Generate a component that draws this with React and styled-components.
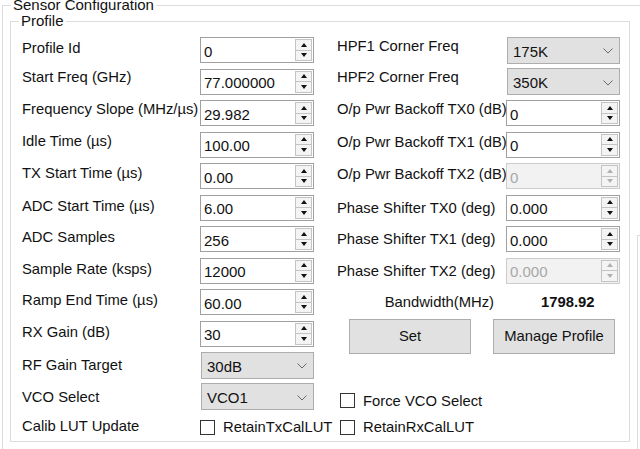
import React from "react"
import styled, { createGlobalStyle } from "styled-components"

const GlobalStyle = createGlobalStyle`
  html, body {
    margin: 0;
    padding: 0;
    background: #ffffff;
    overflow: hidden;
  }
  body {
    width: 640px;
    height: 449px;
    font-family: "Liberation Sans", Arial, sans-serif;
    font-size: 14.8px;
    color: #111111;
  }
  #root {
    width: 640px;
    height: 449px;
    overflow: hidden;
  }
`

const leftRows = [
  { label: "Profile Id", value: "0", dy: -2.5 },
  { label: "Start Freq (GHz)", value: "77.000000", dy: -5 },
  { label: "Frequency Slope (MHz/µs)", value: "29.982", dy: -4.5 },
  { label: "Idle Time (µs)", value: "100.00", dy: -4 },
  { label: "TX Start Time (µs)", value: "0.00", dy: -3.5 },
  { label: "ADC Start Time (µs)", value: "6.00", dy: -2 },
  { label: "ADC Samples", value: "256", dy: -2.5 },
  { label: "Sample Rate (ksps)", value: "12000", dy: -2 },
  { label: "Ramp End Time (µs)", value: "60.00", dy: -2.5 },
  { label: "RX Gain (dB)", value: "30", dy: -2 },
  { label: "RF Gain Target", combo: "30dB", dy: -0.5 },
  { label: "VCO Select", combo: "VCO1", dy: 0 },
]

const rightRows = [
  { label: "HPF1 Corner Freq", combo: "175K", dy: -4 },
  { label: "HPF2 Corner Freq", combo: "350K", dy: -5 },
  { label: "O/p Pwr Backoff TX0 (dB)", value: "0", dy: -4.5 },
  { label: "O/p Pwr Backoff TX1 (dB)", value: "0", dy: -3 },
  { label: "O/p Pwr Backoff TX2 (dB)", value: "0", dy: -2.5, disabled: true },
  { label: "Phase Shifter TX0 (deg)", value: "0.000", dy: 0 },
  { label: "Phase Shifter TX1 (deg)", value: "0.000", dy: 0 },
  { label: "Phase Shifter TX2 (deg)", value: "0.000", dy: 0, disabled: true },
]

const Chevron = () => (
  <svg width="10" height="6" viewBox="0 0 10 6">
    <path d="M0.5 0.5 L5 5 L9.5 0.5" fill="none" stroke="#6a6a6a" strokeWidth="1" />
  </svg>
)

const SpinField = ({ value, disabled }) => (
  <Field $disabled={disabled}>
    <FieldText $disabled={disabled}>{value}</FieldText>
    <Spinner>
      <SpinButton>
        <Arrow $up $disabled={disabled} />
      </SpinButton>
      <SpinButton>
        <Arrow $disabled={disabled} />
      </SpinButton>
    </Spinner>
  </Field>
)

const ComboBox = ({ value }) => (
  <Combo>
    <span>{value}</span>
    <Chevron />
  </Combo>
)

const CheckItem = ({ label, dy }) => (
  <Check $dy={dy}>
    <Box />
    <span>{label}</span>
  </Check>
)

const Row = ({ row }) => (
  <>
    <Label $dy={row.dy}>{row.label}</Label>
    {row.combo ? (
      <ComboBox value={row.combo} />
    ) : (
      <SpinField value={row.value} disabled={row.disabled} />
    )}
  </>
)

const App = () => {
  return (
    <>
      <GlobalStyle />
      <Outer>
        <Legend $offset={1}>Sensor Configuration</Legend>
        <Profile>
          <Legend $offset={-3}>Profile</Legend>
          <Form>
            <Grid>
              {leftRows.map(row => (
                <Row key={row.label} row={row} />
              ))}
              <Label $dy={0.5}>Calib LUT Update</Label>
              <CheckItem label="RetainTxCalLUT" dy={2} />
            </Grid>
            <RightGrid>
              {rightRows.map(row => (
                <Row key={row.label} row={row} />
              ))}
              <Bandwidth>Bandwidth(MHz)</Bandwidth>
              <BandValue>1798.92</BandValue>
              <Buttons>
                <Button>Set</Button>
                <Button>Manage Profile</Button>
              </Buttons>
              <Wide>
                <CheckItem label="Force VCO Select" dy={4} />
              </Wide>
              <Wide>
                <CheckItem label="RetainRxCalLUT" dy={2} />
              </Wide>
            </RightGrid>
          </Form>
        </Profile>
        <SidePanel />
      </Outer>
    </>
  )
}

export default App

const Outer = styled.fieldset`
  box-sizing: border-box;
  width: 800px;
  min-width: 0;
  margin: 0 0 0 2px;
  padding: 6px 0 20px 7px;
  border: 1px solid #dcdcdc;
  display: flex;
  align-items: flex-start;
  gap: 7px;
`

const Legend = styled.legend`
  margin-left: ${props => props.$offset}px;
  padding: 0 2px;
  font-size: 15px;
  line-height: 10px;
  white-space: nowrap;
  color: #111111;
`

const Profile = styled.fieldset`
  box-sizing: border-box;
  flex: none;
  width: 620px;
  min-width: 0;
  margin: 0;
  padding: 8.25px 8px 2.5px 11px;
  border: 1px solid #dcdcdc;
`

const SidePanel = styled.div`
  flex: none;
  width: 120px;
  height: 260px;
  margin-top: 219px;
  border: 1px solid #dcdcdc;
`

const Form = styled.div`
  display: flex;
  align-items: flex-start;
`

const Grid = styled.div`
  display: grid;
  grid-template-columns: 178px 114px;
  grid-template-rows: repeat(12, 31.5px) 26px;
  align-items: center;
`

const RightGrid = styled(Grid)`
  margin-left: 23px;
  grid-template-columns: 169px 114px;
`

const Label = styled.div`
  white-space: nowrap;
  margin: ${props => (props.$dy > 0 ? 2 * props.$dy : 0)}px 0
    ${props => (props.$dy < 0 ? -2 * props.$dy : 0)}px;
`

const Field = styled.div`
  box-sizing: border-box;
  height: 26px;
  display: flex;
  align-items: center;
  padding: 1px 1px 1px 3px;
  border: 1px solid ${props => (props.$disabled ? "#cccccc" : "#a0a0a0")};
  background: ${props => (props.$disabled ? "#f2f2f2" : "#ffffff")};
`

const FieldText = styled.span`
  flex: 1;
  padding-top: 2px;
  font-size: 15px;
  color: ${props => (props.$disabled ? "#a8a8a8" : "#111111")};
`

const Spinner = styled.div`
  width: 17px;
  height: 22px;
  display: flex;
  flex-direction: column;
`

const SpinButton = styled.div`
  flex: 1;
  display: flex;
  align-items: center;
  justify-content: center;
  border: 1px solid #c4c4c4;
  background: #f4f4f4;
  & + & {
    border-top: none;
  }
`

const Arrow = styled.span`
  width: 0;
  height: 0;
  border-left: 3.5px solid transparent;
  border-right: 3.5px solid transparent;
  ${props =>
    props.$up
      ? `border-bottom: 4px solid ${props.$disabled ? "#b0b0b0" : "#111"};`
      : `border-top: 4px solid ${props.$disabled ? "#b0b0b0" : "#111"};`}
`

const Combo = styled.div`
  box-sizing: border-box;
  height: 27px;
  margin-left: 1px;
  display: flex;
  align-items: center;
  justify-content: space-between;
  padding: 2px 6px 0 5px;
  border: 1px solid #adadad;
  background: #e1e1e1;
  font-size: 15px;
`

const Bandwidth = styled.div`
  justify-self: end;
  margin-right: 12px;
`

const BandValue = styled.div`
  margin-left: 35px;
  font-weight: bold;
`

const Buttons = styled.div`
  grid-column: span 2;
  grid-row: span 2;
  align-self: start;
  display: flex;
  gap: 22px;
  margin: 1px 0 0 12px;
`

const Button = styled.div`
  box-sizing: border-box;
  width: 122px;
  height: 35px;
  display: flex;
  align-items: center;
  justify-content: center;
  border: 1px solid #adadad;
  background: #e1e1e1;
`

const Wide = styled.div`
  grid-column: span 2;
  padding-left: 3px;
`

const Check = styled.div`
  display: flex;
  align-items: center;
  gap: 8px;
  white-space: nowrap;
  margin: ${props => (props.$dy > 0 ? 2 * props.$dy : 0)}px 0
    ${props => (props.$dy < 0 ? -2 * props.$dy : 0)}px;
`

const Box = styled.span`
  box-sizing: border-box;
  flex: none;
  width: 15px;
  height: 15px;
  border: 1px solid #333333;
  background: #ffffff;
`
